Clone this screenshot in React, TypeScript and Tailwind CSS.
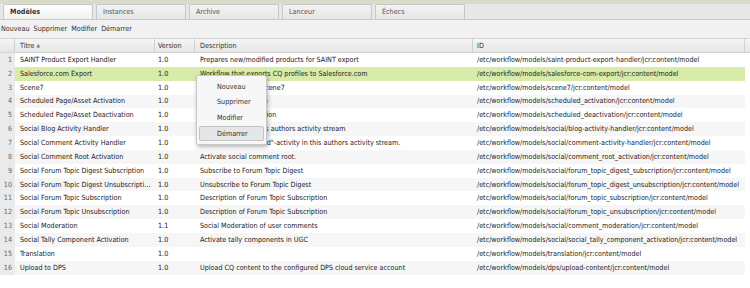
import React from "react";

const rows: [string, string, string, string][] = [
  ["SAINT Product Export Handler", "1.0", "Prepares new/modified products for SAINT export", "/etc/workflow/models/saint-product-export-handler/jcr:content/model"],
  ["Salesforce.com Export", "1.0", "Workflow that exports CQ profiles to Salesforce.com", "/etc/workflow/models/salesforce-com-export/jcr:content/model"],
  ["Scene7", "1.0", "Uploads images to scene7", "/etc/workflow/models/scene7/jcr:content/model"],
  ["Scheduled Page/Asset Activation", "1.0", "Scheduled Activation", "/etc/workflow/models/scheduled_activation/jcr:content/model"],
  ["Scheduled Page/Asset Deactivation", "1.0", "Scheduled Deactivation", "/etc/workflow/models/scheduled_deactivation/jcr:content/model"],
  ["Social Blog Activity Handler", "1.0", "Create activity in this authors activity stream", "/etc/workflow/models/social/blog-activity-handler/jcr:content/model"],
  ["Social Comment Activity Handler", "1.0", "Create a \"commented\"-activity in this authors activity stream.", "/etc/workflow/models/social/comment-activity-handler/jcr:content/model"],
  ["Social Comment Root Activation", "1.0", "Activate social comment root.", "/etc/workflow/models/social/comment_root_activation/jcr:content/model"],
  ["Social Forum Topic Digest Subscription", "1.0", "Subscribe to Forum Topic Digest", "/etc/workflow/models/social/forum_topic_digest_subscription/jcr:content/model"],
  ["Social Forum Topic Digest Unsubscription", "1.0", "Unsubscribe to Forum Topic Digest", "/etc/workflow/models/social/forum_topic_digest_unsubscription/jcr:content/model"],
  ["Social Forum Topic Subscription", "1.0", "Description of Forum Topic Subscription", "/etc/workflow/models/social/forum_topic_subscription/jcr:content/model"],
  ["Social Forum Topic Unsubscription", "1.0", "Description of Forum Topic Subscription", "/etc/workflow/models/social/forum_topic_unsubscription/jcr:content/model"],
  ["Social Moderation", "1.1", "Social Moderation of user comments", "/etc/workflow/models/social/comment_moderation/jcr:content/model"],
  ["Social Tally Component Activation", "1.0", "Activate tally components in UGC", "/etc/workflow/models/social/social_tally_component_activation/jcr:content/model"],
  ["Translation", "1.0", "", "/etc/workflow/models/translation/jcr:content/model"],
  ["Upload to DPS", "1.0", "Upload CQ content to the configured DPS cloud service account", "/etc/workflow/models/dps/upload-content/jcr:content/model"],
];

const tabs = ["Modèles", "Instances", "Archive", "Lanceur", "Échecs"];

export default function App() {
  return (
    <div
      className="relative w-[750px] h-[288px] overflow-hidden bg-white text-[#222] text-[7.15px] leading-none"
      style={{ fontFamily: "Tahoma, 'DejaVu Sans Condensed', 'Liberation Sans', sans-serif" }}
    >
      <div className="h-[4px] bg-[#d9dcc9]" />
      <div className="flex h-[16px] gap-[3px] border-b border-[#c9c9c9] bg-[#e8e8e8] pl-[3px]">
        {tabs.map((t, i) => (
          <div
            key={t}
            className={
              "flex w-[90px] items-center rounded-t-[2px] border border-b-0 border-[#c6c6c6] pl-[6px] leading-[12px] " +
              (i === 0
                ? "bg-gradient-to-b from-[#ffffff] to-[#f1f1f1] font-bold text-[#333]"
                : "bg-gradient-to-b from-[#f3f3f3] to-[#e6e6e6] text-[#555]")
            }
          >
            {t}
          </div>
        ))}
      </div>
      <div className="flex h-[18px] items-center gap-[4px] bg-[#f1f1f1] pl-[1px] text-[#333]">
        <span>Nouveau</span>
        <span>Supprimer</span>
        <span>Modifier</span>
        <span>Démarrer</span>
      </div>
      <div className="flex h-[15px] items-center border-y border-[#d4d4d4] bg-gradient-to-b from-[#f5f5f5] to-[#e6e6e6] text-[#333]">
        <div className="h-full w-[15px] border-r border-[#d0d0d0]" />
        <div className="flex h-full w-[140px] items-center border-r border-[#d0d0d0] pl-[5px]">
          Titre <span className="ml-[2px] text-[5px] text-[#777]">▲</span>
        </div>
        <div className="flex h-full w-[40px] items-center border-r border-[#d0d0d0] pl-[3px]">Version</div>
        <div className="flex h-full w-[278px] items-center border-r border-[#d0d0d0] pl-[5px]">Description</div>
        <div className="flex h-full w-[272px] items-center border-r border-[#d0d0d0] pl-[4px]">ID</div>
      </div>
      <div className="pr-[5px]">
        {rows.map((r, i) => {
          const selected = i === 1;
          const alt = i % 2 === 1;
          return (
            <div
              key={i}
              className={
                "flex h-[13.85px] items-center leading-[12px] " +
                (selected ? "bg-[#d8eba9]" : alt ? "bg-[#f6f6f6]" : "bg-white")
              }
            >
              <div className="flex h-full w-[15px] items-center justify-end bg-[#eaeaea] pr-[3px] text-[#666]">
                {i + 1}
              </div>
              <div className="w-[140px] truncate pl-[5px] pr-[4px]">{r[0]}</div>
              <div className="w-[40px] pl-[3px]">{r[1]}</div>
              <div className="w-[278px] truncate pl-[5px]">{r[2]}</div>
              <div className="w-[272px] overflow-hidden whitespace-nowrap pl-[4px]">{r[3]}</div>
            </div>
          );
        })}
      </div>

      <div className="absolute left-[196px] top-[75px] w-[71px] rounded-[2px] border border-[#c8c8c8] bg-[#f7f7f7] py-[3px] text-[#333] shadow-[1px_2px_4px_rgba(0,0,0,0.3)]">
        <div className="flex h-[15px] items-center pl-[20px]">Nouveau</div>
        <div className="flex h-[16px] items-center pl-[20px]">Supprimer</div>
        <div className="flex h-[16px] items-center pl-[20px]">Modifier</div>
        <div className="mx-[2px] flex h-[15px] items-center rounded-[2px] border border-[#c4c4c4] bg-[#e6e6e6] pl-[17px]">
          Démarrer
        </div>
      </div>
    </div>
  );
}
